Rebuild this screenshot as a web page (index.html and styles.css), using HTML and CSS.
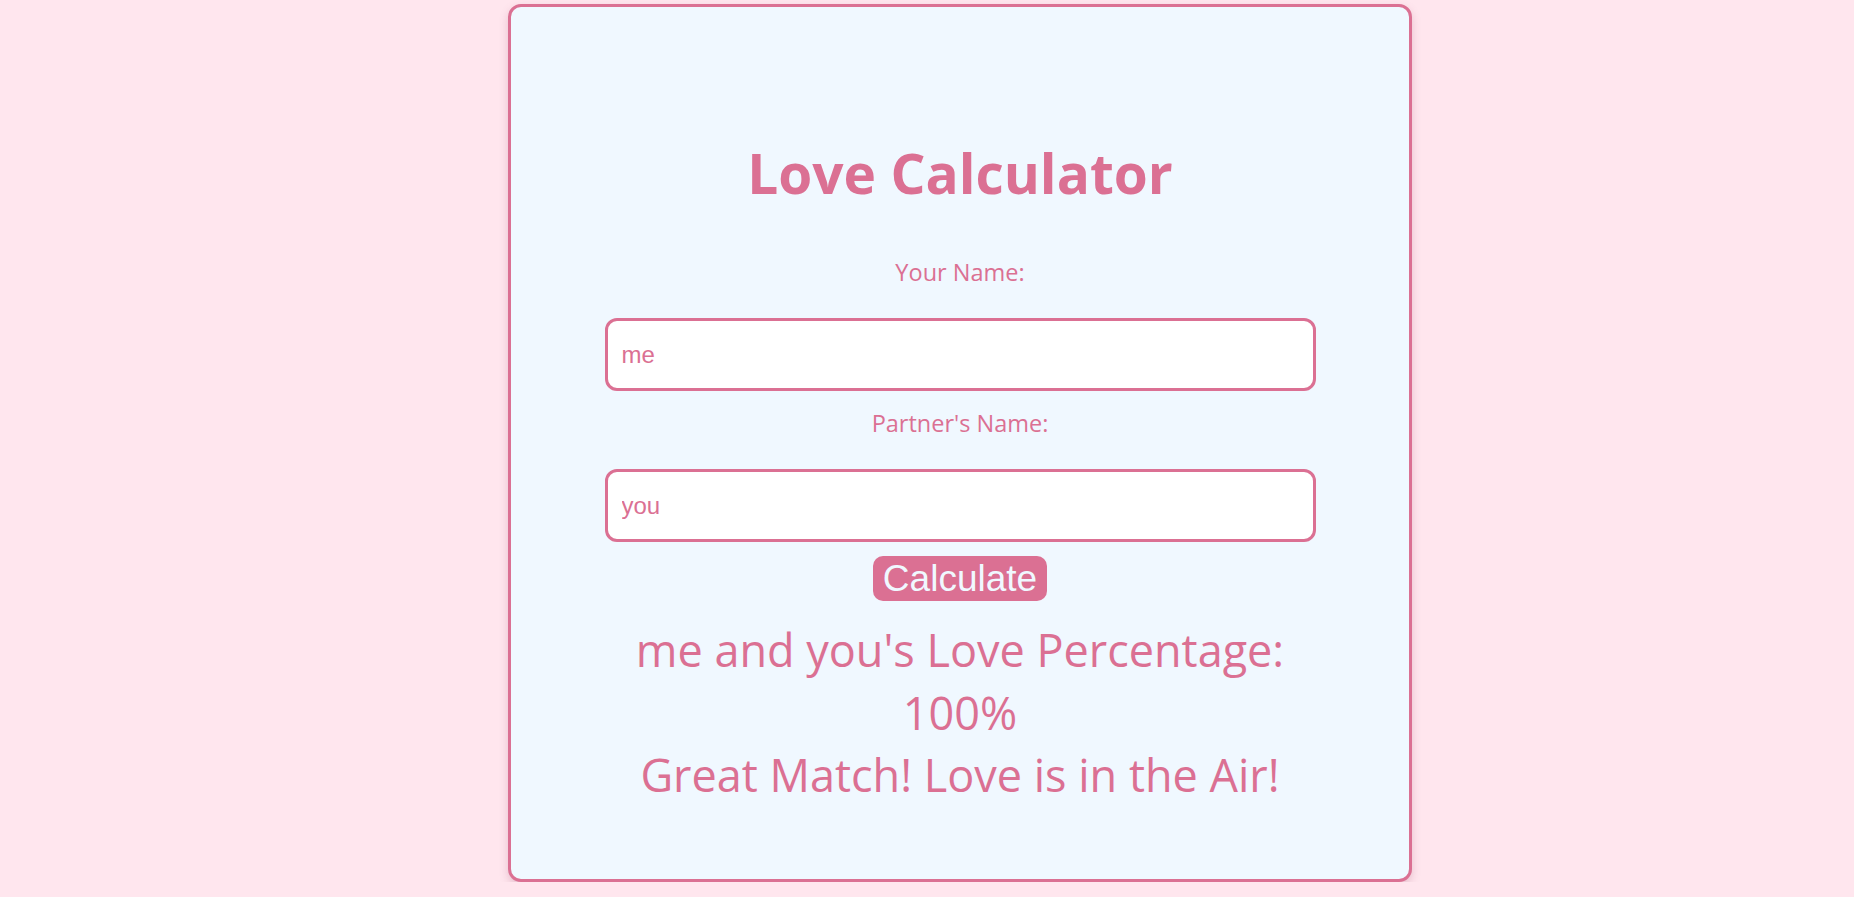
FILE: index.html
```html
<!DOCTYPE html>
<html lang="en">
<head>
<meta charset="utf-8">
<title>Love Calculator</title>
<link rel="stylesheet" href="styles.css">
</head>
<body>
<div class="page">
  <div class="card">
    <h1 class="title">Love Calculator</h1>
    <label class="label" for="name1">Your Name:</label>
    <input class="field" id="name1" type="text" value="me">
    <label class="label label-second" for="name2">Partner's Name:</label>
    <input class="field" id="name2" type="text" value="you">
    <button class="calc-btn" type="button">Calculate</button>
    <div class="result">
      <p class="result-line">me and you's Love Percentage:</p>
      <p class="result-line">100%</p>
      <p class="result-line">Great Match! Love is in the Air!</p>
    </div>
  </div>
</div>
</body>
</html>
```

FILE: styles.css
```css
html, body {
  margin: 0;
  padding: 0;
}

body {
  background: #ffe6ee;
  font-family: "Comic Sans MS", "Open Sans", "Noto Sans", sans-serif;
  color: #db7093;
  overflow: hidden;
}

.page {
  display: flex;
  padding: 4px 0 0 508px;
}

.card {
  box-sizing: border-box;
  width: 904px;
  height: 878px;
  border: 3px solid #db7093;
  border-radius: 13px;
  background: #f0f8ff;
  box-shadow: 0 4px 8px rgba(160, 80, 110, 0.25);
  display: flex;
  flex-direction: column;
  align-items: center;
  padding-top: 131px;
}

.title {
  margin: 0;
  font-size: 55px;
  font-weight: 700;
  line-height: 70px;
}

.label {
  display: block;
  margin: 49px 0 31px;
  font-size: 23.5px;
  line-height: 30px;
}

.label-second {
  margin-top: 17px;
}

.field {
  box-sizing: border-box;
  width: 711px;
  height: 73px;
  margin: 0;
  padding: 0 14px;
  border: 3px solid #db7093;
  border-radius: 12px;
  background: #ffffff;
  color: #db7093;
  font-family: "Liberation Sans", Arial, sans-serif;
  font-size: 24px;
  outline: none;
}

.calc-btn {
  margin-top: 14px;
  padding: 2px 10px;
  border: none;
  border-radius: 10px;
  background: #db7093;
  color: #f0f8ff;
  font-family: "Liberation Sans", Arial, sans-serif;
  font-size: 37px;
  line-height: 41px;
}

.result {
  margin-top: 18px;
  text-align: center;
}

.result-line {
  margin: 0;
  font-size: 45px;
  line-height: 62.5px;
}
```
